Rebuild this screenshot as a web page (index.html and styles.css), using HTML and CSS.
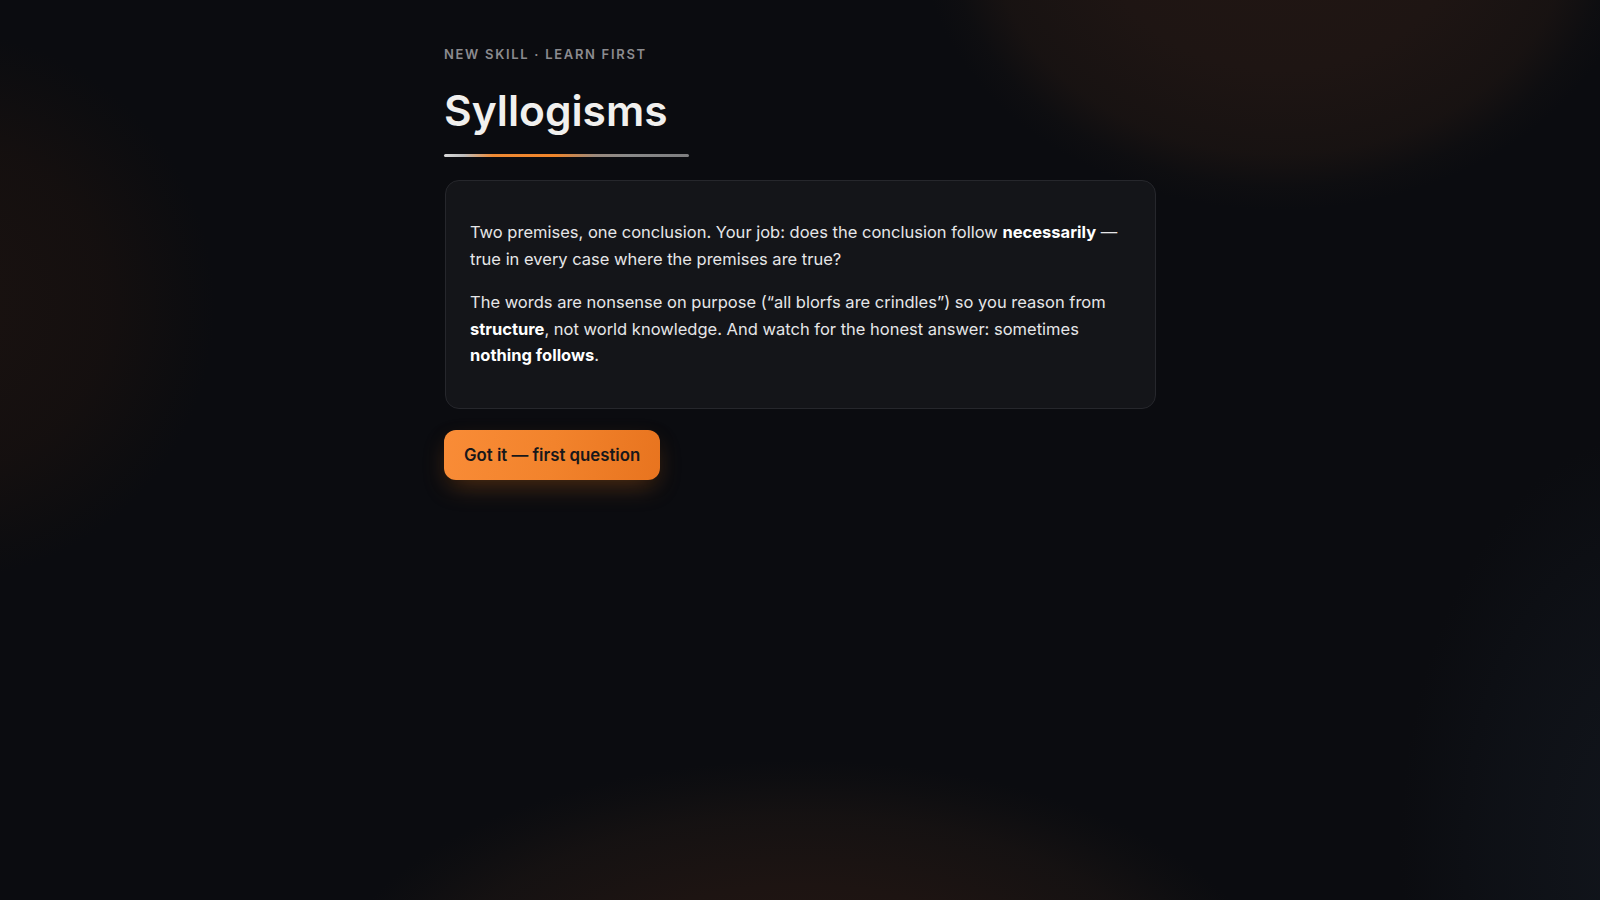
FILE: index.html
```html
<!DOCTYPE html>
<html lang="en">
<head>
<meta charset="utf-8">
<title>Syllogisms</title>
<link rel="stylesheet" href="styles.css">
</head>
<body>
<main class="page">
  <div class="eyebrow">NEW SKILL · LEARN FIRST</div>
  <h1 class="title">Syllogisms</h1>
  <div class="title-rule"></div>
  <section class="card">
    <p>Two premises, one conclusion. Your job: does the conclusion follow <strong>necessarily</strong> — true in every case where the premises are true?</p>
    <p>The words are nonsense on purpose (“all blorfs are crindles”) so you reason from <strong>structure</strong>, not world knowledge. And watch for the honest answer: sometimes <strong>nothing follows</strong>.</p>
  </section>
  <button class="cta" type="button">Got it — first question</button>
</main>
</body>
</html>
```
FILE: styles.css
```css
html, body {
  margin: 0;
  padding: 0;
}
body {
  min-height: 100vh;
  background-color: #0b0c10;
  background-image:
    radial-gradient(ellipse 360px 280px at 1280px -70px, rgba(33, 22, 19, 1) 0%, rgba(30, 21, 19, 1) 50%, rgba(25, 19, 18, 0.9) 80%, rgba(16, 15, 17, 0.6) 92%, rgba(11, 12, 16, 0) 100%),
    radial-gradient(ellipse 275px 275px at -60px 306px, rgba(26, 18, 16, 1) 0%, rgba(22, 16, 15, 0.85) 60%, rgba(16, 14, 15, 0.5) 88%, rgba(11, 12, 16, 0) 100%),
    radial-gradient(ellipse 480px 250px at 800px 1010px, rgba(36, 23, 18, 1) 0%, rgba(29, 20, 18, 1) 50%, rgba(22, 18, 18, 0.9) 78%, rgba(16, 15, 17, 0.6) 92%, rgba(11, 12, 16, 0) 100%),
    radial-gradient(ellipse 260px 420px at 1660px 850px, rgba(18, 22, 29, 1) 0%, rgba(15, 18, 24, 0.7) 65%, rgba(11, 12, 16, 0) 100%);
  background-repeat: no-repeat;
  font-family: Inter, "Liberation Sans", sans-serif;
  color: #e8e8ea;
}
.page {
  width: 712px;
  margin: 0 auto;
  padding-top: 46px;
  display: flex;
  flex-direction: column;
  align-items: flex-start;
}
.eyebrow {
  font-size: 13px;
  line-height: 16px;
  font-weight: 600;
  letter-spacing: 0.13em;
  color: #8b8b8f;
}
.title {
  margin: 24px 0 0;
  font-size: 42.5px;
  line-height: 50px;
  font-weight: 600;
  letter-spacing: 0;
  color: #f1f0ee;
}
.title-rule {
  margin-top: 18px;
  width: 245px;
  height: 3px;
  border-radius: 2px;
  background: linear-gradient(90deg, #d9d9d9 0%, #bdbdbd 8%, #ef8a34 20%, #f0852a 45%, #9a8a7e 62%, #8a8a8a 75%, #7e7e80 100%);
}
.card {
  box-sizing: border-box;
  width: 711px;
  margin-top: 23px;
  margin-left: 1px;
  padding: 38px 24px 39px;
  background: #141519;
  border: 1px solid #26272c;
  border-radius: 14px;
  font-size: 16.5px;
  line-height: 26.5px;
  color: #e6e6e8;
}
.card p {
  margin: 0 0 17px;
}
.card p:last-child {
  margin-bottom: 0;
}
.card strong {
  font-weight: 700;
  color: #ffffff;
}
.cta {
  margin-top: 21px;
  height: 50px;
  padding: 0 20px;
  border: none;
  border-radius: 12px;
  background: linear-gradient(100deg, #f98c37 0%, #f2832c 50%, #e8741f 100%);
  color: #17171a;
  font-family: Inter, "Liberation Sans", sans-serif;
  font-size: 16.8px;
  font-weight: 600;
  box-shadow: 0 10px 26px -6px rgba(240, 128, 40, 0.35), 0 6px 14px rgba(0, 0, 0, 0.4);
  cursor: pointer;
}
```
